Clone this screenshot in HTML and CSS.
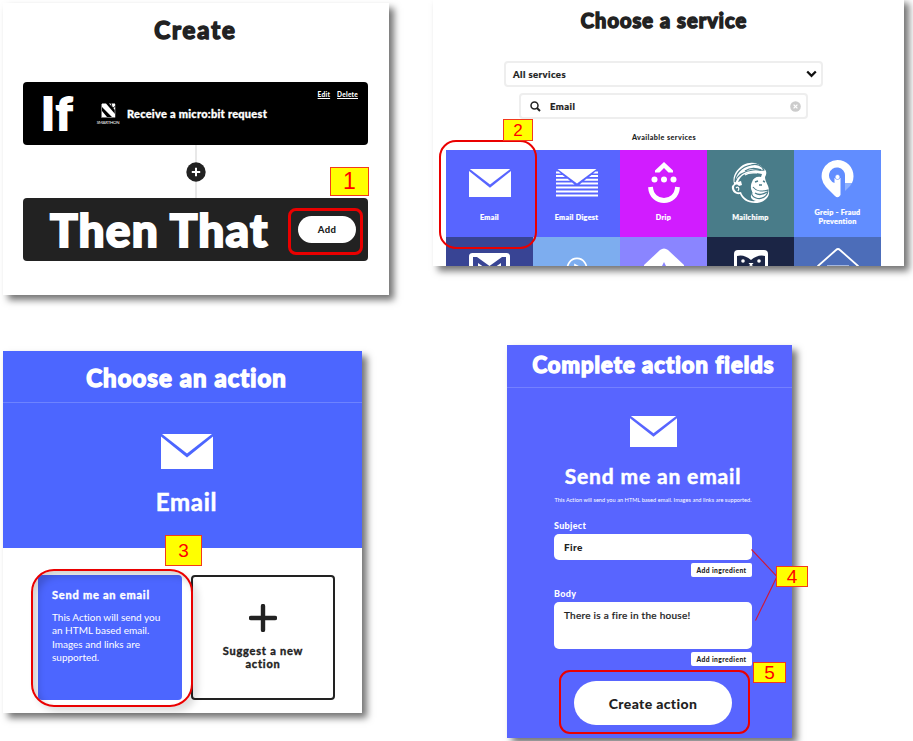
FILE: index.html
```html
<!DOCTYPE html>
<html lang="en">
<head>
<meta charset="utf-8">
<title>Applet setup steps</title>
<link rel="stylesheet" href="styles.css">
</head>
<body>
<svg class="defs" width="0" height="0">
  <symbol id="envelope" viewBox="0 0 52 35" preserveAspectRatio="none">
    <path d="M1 0H51L26 19.500Z"/>
    <path d="M0 2.500L26 23.500L52 2.500V35H0Z"/>
  </symbol>
</svg>
<main class="steps">
  <section class="panel create">
    <h1><span class="t-create">Create</span></h1>
    <div class="rule if-rule">
      <span class="if-word">If</span>
      <span class="brand">
        <svg width="15" height="15" viewBox="0 0 15 15"><path d="M.5 1v13.500H14V1" fill="none" stroke="#aaa" stroke-width=".7"/><path d="M1 .5H5L14 11V14H11L1 4ZM8 .5H14V7ZM1 8L6 14H1Z" fill="#fff"/><path d="M10 0l1.500 5.500L14.500 3" fill="none" stroke="#000" stroke-width=".9"/></svg>
        <span class="brand-name">SMARTHON</span>
      </span>
      <span class="trigger">Receive a micro:bit request</span>
      <span class="links"><a>Edit</a><a>Delete</a></span>
    </div>
    <div class="connector"><svg width="20" height="20" viewBox="0 0 20 20"><circle cx="10" cy="10" r="9.700" fill="#222"/><path d="M10 5.800V14.200M5.800 10H14.200" stroke="#fff" stroke-width="2"/></svg></div>
    <div class="rule then-rule">
      <span class="then-word">Then That</span>
      <button class="add">Add</button>
    </div>
    <i class="ring ring1"></i><b class="tag tag1">1</b>
  </section>

  <section class="panel service">
    <h1><span class="t-service">Choose a service</span></h1>
    <div class="select"><span>All services</span><svg width="11" height="8" viewBox="0 0 11 8"><path d="M1.200 1.500L5.500 5.800L9.800 1.500" fill="none" stroke="#111" stroke-width="2.300"/></svg></div>
    <div class="search">
      <svg width="11" height="11" viewBox="0 0 11 11"><circle cx="4.500" cy="4.500" r="3.500" fill="none" stroke="#222" stroke-width="1.500"/><path d="M7 7L10 10" stroke="#222" stroke-width="1.900"/></svg>
      <span>Email</span>
      <svg class="clear" width="11" height="11" viewBox="0 0 11 11"><circle cx="5.500" cy="5.500" r="5.300" fill="#ccc"/><path d="M3.600 3.600L7.400 7.400M7.400 3.600L3.600 7.400" stroke="#fff" stroke-width="1.300"/></svg>
    </div>
    <p class="available"><span>Available services</span></p>
    <div class="tiles">
      <div class="tile email"><svg class="pic" width="42" height="28" fill="#fff"><use href="#envelope"/></svg><span>Email</span></div>
      <div class="tile digest">
        <svg class="pic" width="42" height="28" viewBox="0 0 42 28" fill="#fff"><path d="M1.500 0H40.500L21 14.500Z"/><path d="M0 2.500H2.500L5 4.500H0ZM42 2.500H39.500L37 4.500H42ZM0 6H6.500L9 8H0ZM42 6H35.500L33 8H42ZM0 9.700H11.500L14 11.700H0ZM42 9.700H30.500L28 11.700H42ZM0 13.500H16L18.500 15.500H0ZM42 13.500H26L23.500 15.500H42ZM0 17.500H42V19.500H0ZM0 21.500H42V23.500H0ZM0 25.500H42V27.500H0Z"/></svg>
        <span>Email Digest</span></div>
      <div class="tile drip">
        <svg class="pic" width="34" height="42" viewBox="0 0 34 42"><path d="M17 0L26 8.500V10.500H21.500L17 6L12.500 10.500H8V8.500Z" fill="#fff"/><circle cx="7.500" cy="17.500" r="3" fill="#fff"/><circle cx="17" cy="17.500" r="3" fill="#fff"/><circle cx="26.500" cy="17.500" r="3" fill="#fff"/><path d="M3.500 25C4.500 43 29.500 43 30.500 25" fill="none" stroke="#fff" stroke-width="4.800"/></svg>
        <span>Drip</span></div>
      <div class="tile chimp">
        <svg class="pic" width="40" height="42" viewBox="0 0 40 42"><path d="M3 22C1 14 5 8 12 3C20-1 28 1 32 6C36 8 36 12 34 15C34 20 38 23 38 29C39 37 31 41 24 41C16 41 11 37 9 32C4 33 0 29 1 24Z" fill="#fff"/><path d="M4 20C7 12 14 9 22 8C27 7 31 9 33 8C31 4 26 1 20 3C10 5 4 12 4 20Z" fill="#fff" stroke="#497c89" stroke-width="1.200"/><path d="M7 20C10 12 17 10 25 11L31 12L30 15C26 14 22 16 21 20C19 24 20 29 22 30C18 34 20 38 25 39C18 40 12 36 10 30C6 31 3 29 3 25C4 22 6 22 8 24L11 23L10 19Z" fill="#497c89"/><path d="M22 25C25 29 31 30 37 28C37 34 31 38 25 36C22 35 20 33 21 30" fill="#fff" stroke="#497c89" stroke-width="1.200"/><path d="M24 31C29 34 33 32 36 30M24 20L27 19M32 19L34 20M28 23H31M14 9C20 5 25 6 30 8" fill="none" stroke="#497c89" stroke-width="1.400"/><path d="M14 13C18 10 22 11 26 11M5 26C7 24 9 26 7 29" fill="none" stroke="#fff" stroke-width="1.200"/></svg>
        <span>Mailchimp</span></div>
      <div class="tile greip">
        <svg class="pic" width="33" height="39" viewBox="0 0 33 39"><path d="M16.500 0A16 16 0 0 1 32.500 16.500Q32.500 20 31 23H24V16A8 8 0 1 0 13.500 23V18H19.500V35Q17 39 14 36L5 27A16 16 0 0 1 16.500 0Z" fill="#fff"/><path d="M24 23h7l-2 3-5 5Z" fill="#8eb1ff"/><circle cx="16.500" cy="17" r="2.500" fill="#fff" stroke="#618dff" stroke-width=".7"/></svg>
        <span>Greip - Fraud<br>Prevention</span></div>
      <div class="tile low gmail"><svg class="pic" width="41" height="30" viewBox="0 0 41 30"><rect width="41" height="38" rx="3.500" fill="#fff"/><path d="M4 4H8L20.500 13L33 4H37V30H32V10L20.500 18L9 10V30H4Z" fill="#384494"/></svg></div>
      <div class="tile low spiral"><svg class="pic" width="22" height="22" viewBox="0 0 22 22" fill="none" stroke="#fff" stroke-width="1.700"><path d="M2 15A9.500 9.500 0 1 1 20 15M9 16V9L13 11"/></svg></div>
      <div class="tile low house"><svg class="pic" width="42" height="32" viewBox="0 0 42 32"><path d="M1 17L17 2Q21-1 25 2L41 17V32H1Z" fill="#fff"/><path d="M21 14L18 20H24Z" fill="#8a85ff"/></svg></div>
      <div class="tile low owl"><svg class="pic" width="34" height="30" viewBox="0 0 34 30"><rect width="34" height="36" rx="4" fill="#fff"/><path d="M3 6Q10 4 17 10Q24 4 31 6V18H24L17 15L10 18H3Z" fill="#1b2545"/><circle cx="9" cy="11" r="1.800" fill="#fff"/><circle cx="25" cy="11" r="1.800" fill="#fff"/><path d="M14.500 13H19.500L17 16Z" fill="#fff"/></svg></div>
      <div class="tile low roof"><svg class="pic" width="42" height="32" viewBox="0 0 42 32"><path d="M1 18L19 2Q21 0 23 2L41 18V32H1Z" fill="none" stroke="#fff" stroke-width="1.800"/><rect x="10" y="17" width="22" height="12" fill="#a5b7df"/></svg></div>
    </div>
    <i class="ring ring2"></i><b class="tag tag2">2</b>
  </section>

  <section class="panel action">
    <h1><span class="t-action">Choose an action</span></h1>
    <div class="hero"><svg width="52" height="35" fill="#fff"><use href="#envelope"/></svg><h2>Email</h2></div>
    <div class="cards">
      <div class="card send"><h3>Send me an email</h3><p>This Action will send you<br>an HTML based email.<br>Images and links are<br>supported.</p></div>
      <div class="card suggest"><svg width="28" height="28" viewBox="0 0 28 28"><path d="M14 2V26M2 14H26" stroke="#222" stroke-width="4.400" stroke-linecap="round"/></svg><h3>Suggest a new<br>action</h3></div>
    </div>
    <i class="ring ring3"></i><b class="tag tag3">3</b>
  </section>

  <section class="panel fields">
    <h1><span class="t-fields">Complete action fields</span></h1>
    <div class="form">
      <svg class="mail" width="47" height="31" fill="#fff"><use href="#envelope"/></svg>
      <h2>Send me an email</h2>
      <p class="note">This Action will send you an HTML based email. Images and links are supported.</p>
      <label class="l1">Subject</label>
      <div class="input">Fire</div>
      <button class="ing">Add ingredient</button>
      <label class="l2">Body</label>
      <div class="input area">There is a fire in the house!</div>
      <button class="ing">Add ingredient</button>
      <button class="submit">Create action</button>
    </div>
    <svg class="lines" width="28" height="74" viewBox="0 0 28 74"><path d="M.5 1.500L26 28.500L4.500 72.500" fill="none" stroke="#d01835" stroke-width="1.100"/></svg>
    <i class="ring ring5"></i><b class="tag tag4">4</b><b class="tag tag5">5</b>
  </section>
</main>
</body>
</html>
```
FILE: styles.css
```css
* { box-sizing: border-box; }
body { margin: 0; background: #fff; color: #222; font-family: Lato, "Open Sans", sans-serif; font-weight: 900; font-variant-ligatures: none; overflow: hidden; }
h1, h2, h3, p { margin: 0; white-space: nowrap; }
button { border: 0; padding: 0; background: #fff; color: #222; font: inherit; white-space: nowrap; }
span { white-space: nowrap; }
svg { display: block; flex: none; }
.defs { position: absolute; }

.steps { display: grid; grid-template-columns: 433px 480px; grid-template-rows: 345px 396px; width: 913px; height: 741px; overflow: hidden; }
.panel { position: relative; background: #fff; box-shadow: 5px 5px 7px rgba(0, 0, 0, .55); }
h1 { display: flex; align-items: center; justify-content: center; font-size: 24px; line-height: 30px; letter-spacing: 1.050px; -webkit-text-stroke: 1.600px currentColor; }

.create { width: 386px; height: 292px; margin: 3px 0 0 3px; padding: 0 21px 0 20px; }
.create h1 { height: 79px; padding-bottom: 26px; }
.t-create { letter-spacing: 1.900px; }
.rule { position: relative; display: flex; align-items: center; height: 63px; border-radius: 4px; color: #fff; }
.if-rule { background: #000; padding-left: 18px; }
.if-word { width: 56px; font-size: 46px; line-height: 60px; letter-spacing: 1.500px; -webkit-text-stroke: 1.800px #fff; padding-bottom: 2px; }
.brand { display: flex; flex-direction: column; align-items: center; width: 22px; gap: 2px; padding-top: 1px; }
.brand-name { font-size: 4.300px; line-height: 5px; font-weight: 400; letter-spacing: -.2px; }
.trigger { margin-left: 8px; font-size: 11px; letter-spacing: .26px; -webkit-text-stroke: .3px #fff; }
.links { position: absolute; top: 8px; right: 10px; display: flex; gap: 7px; font-size: 6.500px; line-height: 10px; letter-spacing: .25px; text-decoration: underline; }
.connector { display: flex; height: 53px; align-items: center; justify-content: center; background: linear-gradient(#e8e8e8, #e8e8e8) center / 2px 100% no-repeat; }
.then-rule { background: #222; justify-content: space-between; padding: 0 12px 0 27px; }
.then-word { font-size: 46px; line-height: 60px; letter-spacing: 1.200px; -webkit-text-stroke: 2px #fff; }
.add { width: 58px; height: 27px; border-radius: 14px; font-size: 9.500px; letter-spacing: .4px; }

.service { width: 471px; height: 268px; margin-top: -2px; padding: 2px 22px 0 13px; }
.service h1 { height: 61px; padding-bottom: 21px; font-size: 20px; }
.select, .search { display: flex; align-items: center; border: 2px solid #eee; border-radius: 4px; height: 26px; font-size: 9.500px; letter-spacing: .42px; -webkit-text-stroke: .2px #222; }
.select { width: 319px; margin: 0 auto 6px 58px; padding: 0 4px 0 7px; justify-content: space-between; }
.search { width: 289px; margin-left: 73px; padding: 0 5px 0 9px; }
.search span { margin: 0 auto 0 9px; }
.available { display: flex; justify-content: center; height: 31px; padding-top: 13px; font-size: 7.200px; line-height: 12px; letter-spacing: .4px; }
.tiles { display: grid; grid-template-columns: repeat(5, 87px); grid-template-rows: 87px 29px; width: 435px; overflow: hidden; color: #fff; }
.tile { display: flex; flex-direction: column; align-items: center; justify-content: space-between; padding: 19px 0 15px; font-size: 7.200px; line-height: 8.500px; letter-spacing: .3px; -webkit-text-stroke: .2px #fff; text-align: center; }
.email, .digest { background: #5865ff; }
.drip { background: #d11cff; padding-top: 12px; }
.chimp { background: #497c89; padding-top: 12px; }
.greip { background: #618dff; padding: 10px 0 11px; }
.low { padding: 0; overflow: hidden; justify-content: flex-start; }
.gmail { background: #384494; padding-top: 16px; }
.spiral { background: #7dadef; padding-top: 19px; }
.house { background: #8a85ff; padding-top: 11px; }
.owl { background: #1b2545; padding-top: 13px; }
.roof { background: #4c6db9; padding-top: 11px; }

.action { width: 359px; height: 362px; margin: 6px 0 0 3px; }
.action h1 { height: 52px; padding-top: 2px; color: #fff; background: #4c66ff; border-bottom: 1px solid #6d83ff; }
.hero { display: flex; flex-direction: column; align-items: center; height: 145px; padding-top: 31px; color: #fff; background: #4c66ff; }
.action h1, .hero { padding-left: 8px; }
.hero h2 { margin-top: 18px; font-size: 24px; line-height: 30px; letter-spacing: .7px; -webkit-text-stroke: .5px #fff; }
.cards { display: flex; gap: 9px; padding: 27px 0 0 35px; }
.card { width: 144px; height: 125px; border-radius: 4px; }
.card h3 { font-size: 11px; line-height: 13px; letter-spacing: .78px; -webkit-text-stroke: .4px currentColor; }
.send { padding: 14px; color: #fff; background: #4c66ff; }
.send h3 { margin-top: -1px; }
.send p { margin-top: 10px; font-size: 10px; line-height: 13.400px; font-weight: 400; }
.suggest { display: flex; flex-direction: column; align-items: center; padding-top: 27px; border: 2px solid #222; text-align: center; }
.suggest h3 { margin-top: 12px; }

.fields { width: 285px; height: 393px; margin-left: 74px; color: #fff; background: #5865ff; }
.fields h1 { height: 43px; padding: 0 0 2px 8px; font-size: 22px; border-bottom: 1px solid #7480ff; }
.form { display: flex; flex-direction: column; align-items: flex-end; padding: 28px 40px 0 47px; }
.form .mail, .form h2, .note { align-self: center; }
.form h2 { margin-top: 15px; font-size: 21px; line-height: 28px; letter-spacing: .85px; -webkit-text-stroke: .5px #fff; }
.note { margin-top: 6px; font-size: 5.600px; line-height: 8px; font-weight: 400; letter-spacing: .03px; }
label { align-self: flex-start; font-size: 9px; line-height: 12px; letter-spacing: .3px; }
.l1 { margin-top: 16px; margin-bottom: 2px; }
.l2 { margin-top: 11px; margin-bottom: 2px; }
.input { width: 198px; height: 26px; margin-bottom: 3px; padding: 0 10px; border-radius: 5px; background: #fff; color: #222; font-size: 10px; line-height: 26px; letter-spacing: .4px; white-space: nowrap; }
.area { height: 47px; font-weight: 500; letter-spacing: .26px; -webkit-text-stroke: .2px #222; }
.ing { width: 61px; height: 14px; border-radius: 2px; font-size: 6.700px; line-height: 14px; letter-spacing: .4px; }
.submit { width: 158px; height: 44px; margin: 15px 20px 0 0; border-radius: 22px; font-size: 14px; letter-spacing: .35px; }

.ring { position: absolute; border: 3px solid #ea0000; }
.tag { position: absolute; display: flex; align-items: center; justify-content: center; border: 1px solid #f23a1c; background: #ff0; color: #f00; font: 19px/1 "Liberation Sans", Arial, sans-serif; }
.ring1 { left: 285px; top: 205px; width: 75px; height: 47px; border-radius: 8px; }
.tag1 { left: 327px; top: 164px; width: 39px; height: 29px; font-size: 23px; }
.ring2 { left: 6px; top: 142px; width: 98px; height: 109px; border-width: 2px; border-radius: 17px; }
.tag2 { left: 70px; top: 121px; width: 30px; height: 22px; font-size: 17px; }
.ring3 { left: 28px; top: 218px; width: 162px; height: 138px; border-width: 2px; border-radius: 23px; box-shadow: 5px 5px 7px rgba(0, 0, 0, .13), inset 5px 5px 7px rgba(0, 0, 0, .18); }
.tag3 { left: 162px; top: 184px; width: 37px; height: 31px; }
.lines { position: absolute; left: 244px; top: 203px; }
.ring5 { left: 52px; top: 325px; width: 191px; height: 64px; border-width: 2px; border-radius: 11px; }
.tag4 { left: 269px; top: 221px; width: 32px; height: 21px; }
.tag5 { left: 246px; top: 317px; width: 33px; height: 21px; }
```
